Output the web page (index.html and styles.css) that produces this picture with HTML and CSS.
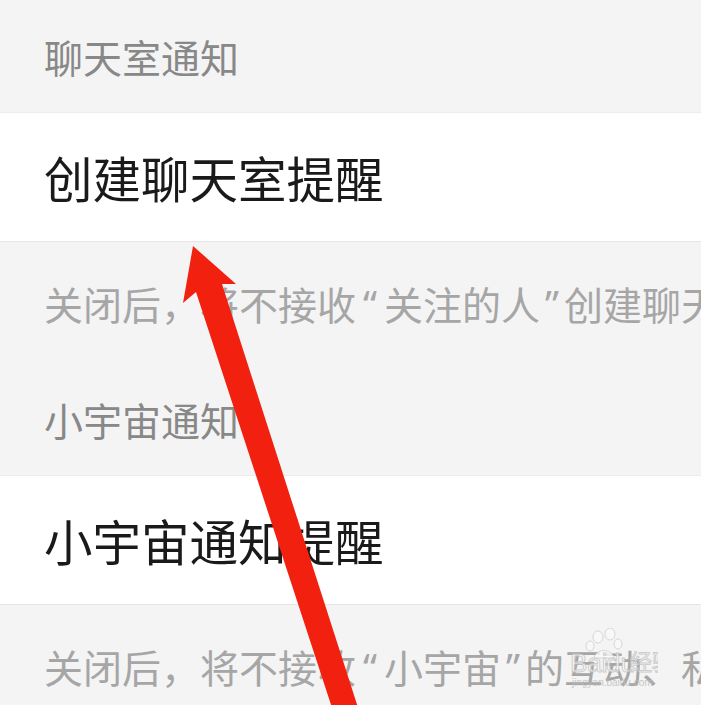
FILE: index.html
```html
<!DOCTYPE html>
<html lang="en">
<head>
	<meta charset="UTF-8">
	<title>通知设置</title>
	<link rel="stylesheet" href="styles.css">
</head>
<body>
	<div class="page">
		<div class="group-title">聊天室通知</div>
		<div class="item">创建聊天室提醒</div>
		<div class="tip">关闭后，将不接收<span class="q-open">“</span>关注的人<span class="q-close">”</span>创建聊天室的提醒</div>

		<div class="group-title">小宇宙通知</div>
		<div class="item">小宇宙通知提醒</div>
		<div class="tip">关闭后，将不接收<span class="q-open">“</span>小宇宙<span class="q-close">”</span>的互动、私信等通知</div>

		<!-- 百度经验水印 -->
		<svg class="watermark" width="90" height="64" viewBox="0 0 90 64" aria-hidden="true">
			<g fill="#fafafa" stroke="#cfcfcf" stroke-width="1">
				<ellipse cx="30" cy="9" rx="5" ry="6"/>
				<ellipse cx="42" cy="6" rx="5" ry="6"/>
				<ellipse cx="22" cy="18" rx="4" ry="5"/>
				<ellipse cx="50" cy="16" rx="4" ry="5"/>
				<path d="M26 30 C28 20 44 20 46 30 Z"/>
			</g>
			<text x="2" y="44" class="wm-text">Bai</text>
			<text x="38" y="44" class="wm-text">du</text>
			<text x="62" y="42" class="wm-cn">经验</text>
			<text x="4" y="58" class="wm-url">jingyan.baidu.com</text>
		</svg>

		<!-- 红色箭头标注 -->
		<svg class="arrow" width="701" height="705" viewBox="0 0 701 705" aria-hidden="true">
			<polygon points="193,246 236,284 222,284 362,720 336,720 196,292 183,303" fill="#f2200f"/>
		</svg>
	</div>
</body>
</html>
```

FILE: styles.css
```css
*{margin: 0;padding: 0;box-sizing: border-box;}
body{background: #f4f4f4;font-family: "Noto Sans CJK SC", "Noto Sans", sans-serif;overflow: hidden;}
.page{position: relative;width: 701px;height: 705px;overflow: hidden;}
.group-title{height: 112px;display: flex;align-items: center;padding-left: 44px;font-size: 39px;color: #888;white-space: nowrap;}
.item{height: 130px;display: flex;align-items: center;padding-left: 44px;background: #fff;border-top: 1px solid #ececec;border-bottom: 1px solid #e6e6e6;font-size: 48.5px;color: #1a1a1a;white-space: nowrap;}
.tip{height: 121px;display: flex;align-items: center;padding-left: 44px;font-family: "Noto Sans", "Noto Sans CJK SC", sans-serif;font-size: 39px;color: #a6a6a6;white-space: nowrap;overflow: hidden;}
/* 引号用西文字体，两边留点空，宽度和截图一致 */
.q-open{padding: 0 7px;}
.q-close{padding: 0 5px;}
.watermark{position: absolute;left: 568px;top: 628px;opacity: .8;}
.wm-text{font-family: "Liberation Sans", sans-serif;font-size: 26px;fill: #fafafa;stroke: #c4c4c4;stroke-width: 1;}
.wm-cn{font-family: "Noto Sans CJK SC", sans-serif;font-size: 22px;fill: #fafafa;stroke: #c4c4c4;stroke-width: 1;}
.wm-url{font-family: "Liberation Sans", sans-serif;font-size: 10px;fill: #bdbdbd;}
.arrow{position: absolute;left: 0;top: 0;}
```
